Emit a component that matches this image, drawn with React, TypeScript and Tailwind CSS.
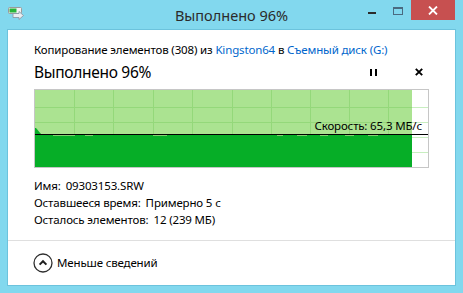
import React from "react";

const font = { fontFamily: '"Noto Sans", "Open Sans", sans-serif' };

// vertical grid lines inside the light green area (x relative to chart inner box)
const vLines = [39, 78, 118, 157, 197, 236, 275, 314, 353];
const hLines = [17, 32, 47, 62];

function CopyIcon() {
  return (
    <svg width="18" height="14" viewBox="0 0 18 14">
      <rect x="0.5" y="0.5" width="13" height="6" rx="1" fill="#f2f2f2" stroke="#9a9a9a" />
      <rect x="1.5" y="1.5" width="7" height="4" fill="#27b53a" />
      <path d="M5 6.5 H11 V4.5 L15.5 8.5 L11 12.5 V10.5 H5 Z" fill="#e9eef2" stroke="#8a9aa6" strokeWidth="0.9" />
    </svg>
  );
}

function Chart() {
  return (
    <div className="mt-[7px] w-[395px] h-[79px] border border-[#c6c6c6]">
      <svg width="393" height="77" viewBox="0 0 393 77" className="block">
        <rect x="0" y="0" width="377" height="77" fill="#abe391" />
        {hLines.map((y) => (
          <line key={"h" + y} x1="0" x2="377" y1={y + 0.5} y2={y + 0.5} stroke="#94d87a" />
        ))}
        {hLines.map((y) => (
          <line key={"hw" + y} x1="377" x2="393" y1={y + 0.5} y2={y + 0.5} stroke="#c8eec0" />
        ))}
        {vLines.map((x) => (
          <line key={"v" + x} x1={x + 0.5} x2={x + 0.5} y1="0" y2="77" stroke="#94d87a" />
        ))}
        <polygon points="0,38 1,38 6,44 6,45 0,45" fill="#06ae27" />
        <rect x="0" y="45" width="377" height="32" fill="#06ae27" />
        {[
          [18, 22],
          [50, 8],
          [118, 14],
          [242, 6],
          [262, 10],
          [285, 8],
          [310, 9],
          [333, 10],
        ].map(([x, w]) => (
          <rect key={"s" + x} x={x} y="45" width={w} height="1" fill="#7fd06e" />
        ))}
        <line x1="0" x2="393" y1="44.5" y2="44.5" stroke="#000" />
        <text
          x="387"
          y="40"
          textAnchor="end"
          fontSize="11.5"
          letterSpacing="-0.15"
          fill="#000"
          style={font}
        >
          Скорость: 65,3 МБ/с
        </text>
      </svg>
    </div>
  );
}

export default function App() {
  return (
    <div className="w-[463px] h-[293px] bg-[#82d8ee] flex flex-col text-[#000]" style={font}>
      {/* Title bar */}
      <div className="h-[30px] grid grid-cols-[1fr_auto_1fr] items-start">
        <div className="pl-[8px] pt-[7px]">
          <CopyIcon />
        </div>
        <div className="pt-[5px] text-[14.5px] leading-[20px] text-[#2b2b2b]">Выполнено 96%</div>
        <div className="flex justify-end pr-[8px]">
          <div className="w-[26px] h-[20px] flex items-center justify-center">
            <div className="w-[8px] h-[2px] bg-[#2b2b2b] mt-[5px]" />
          </div>
          <div className="w-[26px] h-[20px] flex items-center justify-center">
            <div className="w-[10px] h-[8px] border border-t-2 border-[#4a6a80] mt-[1px]" />
          </div>
          <div className="w-[44px] h-[20px] bg-[#c75050] flex items-center justify-center">
            <svg width="10" height="9" viewBox="0 0 10 9">
              <path d="M1 0.5 L9 8.5 M9 0.5 L1 8.5" stroke="#fff" strokeWidth="1.8" />
            </svg>
          </div>
        </div>
      </div>

      {/* Client area */}
      <div className="mx-[8px] h-[255px] bg-white flex flex-col outline outline-1 outline-[#6cc3dd]">
        <div className="pl-[26px] pr-[26px] pt-[12px] flex flex-col text-[11.5px] tracking-[-0.15px]">
          <div className="leading-[16px] whitespace-nowrap">
            Копирование элементов (308) из <span className="text-[#0066cc]">Kingston64</span> в{" "}
            <span className="text-[#0066cc]">Съемный диск (G:)</span>
          </div>
          <div className="mt-[4px] flex items-center h-[20px]">
            <div className="text-[15.5px] tracking-[-0.3px] leading-[20px] flex-1">Выполнено 96%</div>
            <div className="flex items-center gap-[3px] w-[7px] mr-[38px]">
              <div className="w-[2px] h-[7px] bg-black" />
              <div className="w-[2px] h-[7px] bg-black" />
            </div>
            <svg width="8" height="8" viewBox="0 0 8 8" className="mr-[6px]">
              <path d="M0.8 0.8 L7.2 7.2 M7.2 0.8 L0.8 7.2" stroke="#000" strokeWidth="1.9" />
            </svg>
          </div>
          <Chart />
          <div className="mt-[9px] leading-[17px] flex flex-col">
            <div>
              Имя:<span className="ml-[5px]">09303153.SRW</span>
            </div>
            <div>
              Оставшееся время:<span className="ml-[5px]">Примерно 5 с</span>
            </div>
            <div>
              Осталось элементов:<span className="ml-[5px]">12 (239 МБ)</span>
            </div>
          </div>
        </div>
        <div className="mt-[12px] h-px bg-[#dfdfdf]" />
        <div className="pl-[25px] pt-[12px] flex items-center gap-[4px]">
          <svg width="20" height="20" viewBox="0 0 20 20">
            <circle cx="10" cy="10" r="9" fill="none" stroke="#2e2e2e" strokeWidth="1.3" />
            <path d="M6.6 11.6 L10 8.2 L13.4 11.6" fill="none" stroke="#1e1e1e" strokeWidth="2" />
          </svg>
          <span className="text-[11.5px] tracking-[-0.15px] leading-[16px]">Меньше сведений</span>
        </div>
      </div>
    </div>
  );
}
